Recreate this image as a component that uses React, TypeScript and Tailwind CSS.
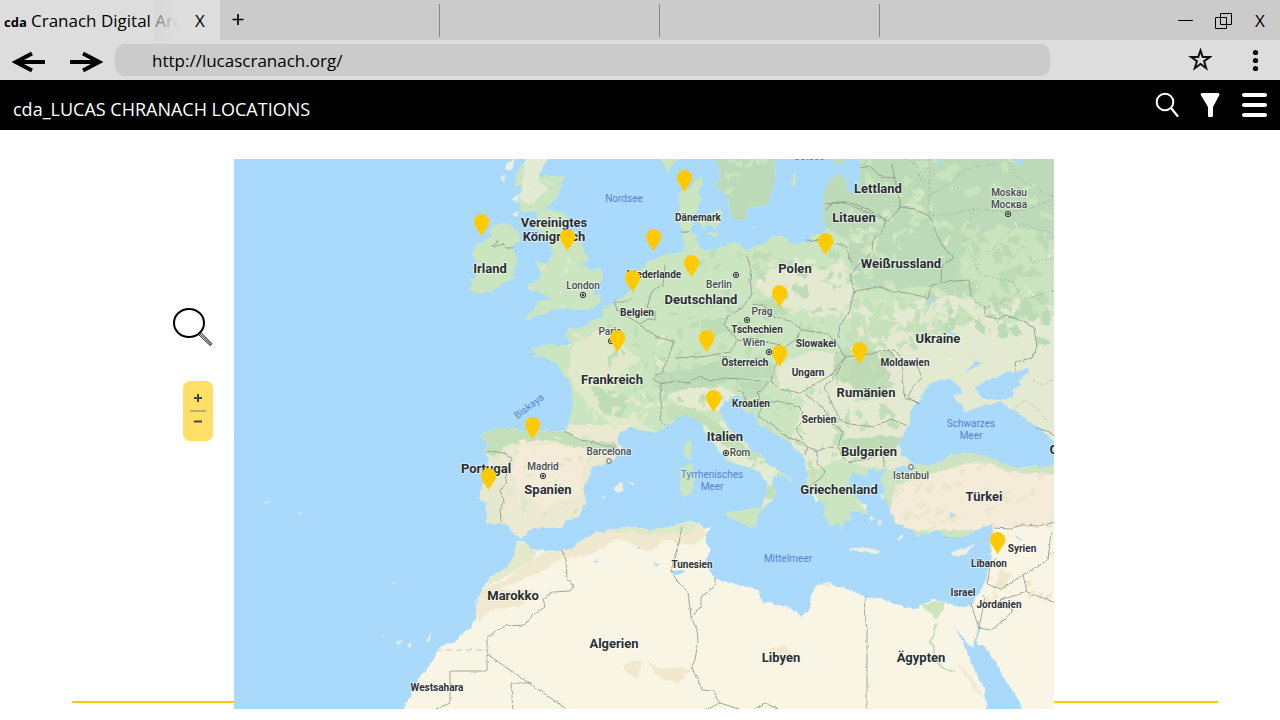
import type { ReactNode } from "react";

type Pin = { x: number; y: number; name: string };
type Label = { x: number; y: number; text: string; kind: "country" | "small" | "city" | "sea"; turn?: number };
type Zone = { x: number; y: number; w: number; h: number; n: number; size: number; fill: string };

/* Map coordinates: x runs from 234 to 1054, y from 159 to 709. */
const MAP = { x: 234, y: 159, w: 820, h: 550 };

const pins: Pin[] = [
  { x: 482, y: 214, name: "Irland" },
  { x: 568, y: 229, name: "Vereinigtes Königreich" },
  { x: 633, y: 270, name: "Belgien" },
  { x: 654, y: 229, name: "Nordsee" },
  { x: 685, y: 170, name: "Dänemark" },
  { x: 692, y: 255, name: "Norddeutschland" },
  { x: 826, y: 233, name: "Nordpolen" },
  { x: 780, y: 285, name: "Polen" },
  { x: 707, y: 330, name: "Süddeutschland" },
  { x: 780, y: 345, name: "Wien" },
  { x: 618, y: 330, name: "Paris" },
  { x: 860, y: 342, name: "Rumänien" },
  { x: 714, y: 390, name: "Norditalien" },
  { x: 533, y: 417, name: "Nordspanien" },
  { x: 489, y: 468, name: "Portugal" },
  { x: 998, y: 532, name: "Syrien" },
];

const labels: Label[] = [
  { x: 554, y: 227, text: "Vereinigtes", kind: "country" },
  { x: 554, y: 241, text: "Königreich", kind: "country" },
  { x: 490, y: 273, text: "Irland", kind: "country" },
  { x: 701, y: 304, text: "Deutschland", kind: "country" },
  { x: 795, y: 273, text: "Polen", kind: "country" },
  { x: 878, y: 193, text: "Lettland", kind: "country" },
  { x: 854, y: 222, text: "Litauen", kind: "country" },
  { x: 901, y: 268, text: "Weißrussland", kind: "country" },
  { x: 938, y: 343, text: "Ukraine", kind: "country" },
  { x: 612, y: 384, text: "Frankreich", kind: "country" },
  { x: 866, y: 397, text: "Rumänien", kind: "country" },
  { x: 725, y: 441, text: "Italien", kind: "country" },
  { x: 869, y: 456, text: "Bulgarien", kind: "country" },
  { x: 839, y: 494, text: "Griechenland", kind: "country" },
  { x: 984, y: 501, text: "Türkei", kind: "country" },
  { x: 486, y: 473, text: "Portugal", kind: "country" },
  { x: 548, y: 494, text: "Spanien", kind: "country" },
  { x: 513, y: 600, text: "Marokko", kind: "country" },
  { x: 614, y: 648, text: "Algerien", kind: "country" },
  { x: 781, y: 662, text: "Libyen", kind: "country" },
  { x: 921, y: 662, text: "Ägypten", kind: "country" },
  { x: 1076, y: 454, text: "Georgien", kind: "country" },
  { x: 698, y: 221, text: "Dänemark", kind: "small" },
  { x: 654, y: 278, text: "Niederlande", kind: "small" },
  { x: 637, y: 316, text: "Belgien", kind: "small" },
  { x: 757, y: 333, text: "Tschechien", kind: "small" },
  { x: 816, y: 347, text: "Slowakei", kind: "small" },
  { x: 745, y: 366, text: "Österreich", kind: "small" },
  { x: 808, y: 376, text: "Ungarn", kind: "small" },
  { x: 905, y: 366, text: "Moldawien", kind: "small" },
  { x: 751, y: 407, text: "Kroatien", kind: "small" },
  { x: 819, y: 423, text: "Serbien", kind: "small" },
  { x: 692, y: 568, text: "Tunesien", kind: "small" },
  { x: 437, y: 691, text: "Westsahara", kind: "small" },
  { x: 1022, y: 552, text: "Syrien", kind: "small" },
  { x: 989, y: 567, text: "Libanon", kind: "small" },
  { x: 963, y: 596, text: "Israel", kind: "small" },
  { x: 999, y: 608, text: "Jordanien", kind: "small" },
  { x: 583, y: 289, text: "London", kind: "city" },
  { x: 719, y: 288, text: "Berlin", kind: "city" },
  { x: 762, y: 315, text: "Prag", kind: "city" },
  { x: 754, y: 346, text: "Wien", kind: "city" },
  { x: 610, y: 335, text: "Paris", kind: "city" },
  { x: 543, y: 470, text: "Madrid", kind: "city" },
  { x: 609, y: 455, text: "Barcelona", kind: "city" },
  { x: 740, y: 456, text: "Rom", kind: "city" },
  { x: 911, y: 479, text: "Istanbul", kind: "city" },
  { x: 1009, y: 196, text: "Moskau", kind: "city" },
  { x: 1009, y: 208, text: "Москва", kind: "city" },
  { x: 624, y: 202, text: "Nordsee", kind: "sea" },
  { x: 809, y: 160, text: "Ostsee", kind: "sea" },
  { x: 531, y: 409, text: "Biskaya", kind: "sea", turn: -37 },
  { x: 712, y: 478, text: "Tyrrhenisches", kind: "sea" },
  { x: 712, y: 490, text: "Meer", kind: "sea" },
  { x: 971, y: 427, text: "Schwarzes", kind: "sea" },
  { x: 971, y: 439, text: "Meer", kind: "sea" },
  { x: 788, y: 562, text: "Mittelmeer", kind: "sea" },
];

const labelClass = {
  country: "fill-[#2b2f33] stroke-white/50 text-[13px] font-bold",
  small: "fill-[#2f3337] stroke-white/50 text-[10px] font-bold",
  city: "fill-[#474b50] stroke-white/50 text-[10px] font-medium",
  sea: "fill-[#5583cf] stroke-transparent text-[10px] font-normal",
};

const capitals = [[583, 295], [736, 275], [747, 320], [769, 352], [611, 341], [543, 476], [726, 453], [1008, 214]];
const towns = [[609, 461], [911, 467]];

const EURASIA =
  "M1060 150 860 150 860 175 859 190 855 195 848 190 845 178 838 174 829 182 823 192 823 222 826 228 822 234 810 237 812 241 800 244 788 243 787 237 773 235 766 243 753 247 747 250 738 242 728 244 718 249 706 251 700 247 697 240 695 235 690 232 693 226 692 218 696 210 703 198 698 192 703 186 702 177 695 180 691 187 680 192 678 199 680 208 677 217 680 224 683 232 682 240 685 245 683 251 675 253 665 255 655 259 647 262 643 268 638 270 632 280 630 292 621 298 613 302 604 307 602 318 593 320 582 328 567 328 567 335 570 345 553 345 545 345 532 348 537 352 533 356 547 358 558 365 562 373 568 380 573 390 572 403 570 417 567 430 557 432 543 430 527 432 510 428 498 427 493 430 482 435 487 447 485 453 488 457 487 467 485 477 480 493 480 500 487 503 486 523 492 524 500 523 508 525 515 535 523 538 528 530 543 528 562 528 567 520 577 517 587 500 583 490 592 467 600 465 610 462 620 453 622 447 618 442 620 433 630 428 640 430 655 433 665 427 683 415 695 418 702 425 708 437 720 450 728 462 750 467 760 473 767 483 768 493 763 502 761 508 767 507 773 500 777 493 772 487 773 477 785 475 792 483 793 480 783 473 765 463 767 457 753 452 743 440 733 433 723 420 720 410 723 402 737 395 740 398 742 410 747 414 753 412 757 423 773 433 790 443 800 453 806 460 807 480 806 487 815 497 826 505 824 515 830 527 838 523 843 532 845 520 852 520 850 511 862 512 868 514 862 503 855 495 850 488 848 478 853 472 860 475 868 477 866 470 880 470 888 466 883 473 881 480 885 490 883 494 887 502 890 510 895 523 913 530 917 537 938 530 947 537 963 537 977 530 993 523 992 530 990 547 992 557 987 577 980 592 972 605 978 630 1060 715Z";
const AFRICA =
  "M972 605 957 607 947 602 933 600 922 605 913 610 887 600 868 598 863 596 850 590 833 585 830 582 817 585 810 595 813 605 802 617 793 610 780 605 763 602 758 590 740 585 723 582 712 575 705 563 710 550 705 540 710 527 703 528 698 522 680 523 670 527 650 530 630 527 597 532 577 543 570 550 557 551 530 549 525 542 518 540 513 560 507 568 490 577 477 597 476 617 470 628 453 642 437 648 433 662 422 673 413 690 402 712 1060 712 1060 600Z";
const BRITAIN =
  "M527 159 517 171 514 185 521 187 518 199 522 212 536 211 538 216 531 222 541 233 551 245 553 254 548 263 534 261 537 268 541 271 540 280 527 285 530 290 540 292 546 297 555 298 540 301 532 311 523 319 530 319 539 315 548 313 553 310 563 308 577 310 593 308 602 300 599 295 593 295 595 288 603 281 604 272 598 268 588 270 583 265 588 261 583 248 580 235 568 229 567 218 558 210 545 209 557 197 565 177 545 175 541 178 538 174 551 156Z";
const IRELAND =
  "M492 235 488 233 493 226 505 223 518 230 520 240 512 247 517 258 513 280 502 283 490 292 477 294 470 290 472 283 469 280 477 276 472 272 477 262 473 255 475 245 483 243Z";
const SWEDEN = "M715 159 722 175 715 185 727 197 730 208 732 218 740 221 748 217 747 208 767 205 773 189 776 155 715 155Z";
const ISLANDS =
  "M658 155 667 172 679 158ZM709 215 715 209 722 212 720 222 715 230 708 223ZM698 221 705 218 707 225 702 229ZM706 233 720 233 715 238ZM751 226 755 227 753 229ZM791 181 796 171 797 178 793 188ZM833 156 850 156 843 164 837 165ZM683 447 690 438 692 447 690 460 685 457ZM680 467 692 465 695 477 692 493 683 498 680 487ZM726 514 735 510 766 508 757 516 757 526 750 529 740 522 728 518Z";
const PALE_ISLANDS =
  "M950 553 958 550 968 547 975 543 967 552 960 557 952 556ZM850 547 866 549 881 551 878 554 860 552 851 549ZM898 539 902 534 901 540ZM613 487 623 483 622 492 617 492ZM629 482 633 482 632 485ZM601 497 604 496 603 499ZM506 165 515 157 513 168 507 171ZM501 178 505 175 504 184ZM513 199 519 194 517 203ZM512 214 520 209 517 217ZM391 583 396 583 395 585ZM396 642 402 640 399 645ZM407 645 411 644 411 648ZM425 641 433 631 428 643ZM382 636 385 637 383 638ZM264 502 270 501 268 503ZM298 513 301 513 300 515ZM813 494 818 498 816 503ZM855 500 867 507 865 509ZM872 485 877 487 874 490ZM880 495 885 498 881 499ZM870 515 874 518 872 522ZM877 520 881 523 879 526Z";
const BLACK_SEA =
  "M932 382 940 380 950 380 962 388 962 393 953 397 963 405 965 413 980 407 993 403 1000 402 1017 412 1037 427 1056 442 1056 460 1047 467 1030 467 1010 467 993 458 980 454 963 453 950 455 940 463 922 465 913 463 902 455 898 443 905 433 910 420 910 410 918 402 925 390Z";
const AZOV = "M975 388 983 383 1007 373 1028 369 1030 372 1017 380 1022 385 1013 388 1012 398 997 400 983 398Z";
const RED_SEA =
  "M951 623 957 630 963 643 973 667 985 690 987 712 1024 712 1017 697 1005 680 997 663 983 645 977 645 979 627 976 632 973 646 968 645 958 630Z";

const borders = [
  "M498 240 493 247 503 244 508 249 513 247",
  "M632 298 627 302 614 302 617 310 630 318 640 324 648 319 655 320 655 312 647 308 650 297 653 290 663 285 665 266",
  "M640 324 646 330 660 338 674 341 669 356 663 370 653 379 661 384 660 395 662 407 660 420 665 425",
  "M661 384 675 381 688 383 700 376 709 381 725 378 744 379 761 381",
  "M746 254 751 268 750 280 752 294 742 308 727 317 724 325 738 340 730 352 700 357 675 358",
  "M752 304 765 306 772 316 789 320 802 330 828 334 838 345 845 357 831 375 800 393 780 389 771 380 776 365 781 350 795 340 802 330",
  "M738 341 752 337 765 342 781 345",
  "M682 231 691 233",
  "M826 204 840 202 852 206 870 213 885 220 884 229 873 240 872 252 860 263 850 275 854 292 849 313 840 325 838 338",
  "M806 240 825 241 846 246 851 263",
  "M826 210 832 203 848 202 868 209 888 221 901 207 896 185 892 165M860 168 870 166 881 177 896 178",
  "M901 207 914 209 929 216 935 230 943 247 954 258 942 265 941 282 931 286 928 298 920 296 907 293 893 292 880 287 866 289 852 292",
  "M941 282 955 281 969 280 971 297 985 308 985 316 999 319 1006 315 1022 321 1034 328 1037 347 1032 358 1015 362 1016 371",
  "M845 357 860 355 871 354 881 351 895 350 905 362 918 367 922 378 913 386 908 397 919 404",
  "M887 349 902 365 902 380 905 398 919 403",
  "M565 431 580 440 593 442 604 446 617 446",
  "M485 453 497 451 508 455 512 460 507 470 506 484 500 490 504 500 500 510 501 522",
  "M845 357 837 374 824 387 834 408 841 421 850 424 874 427 891 419 908 426",
  "M805 394 823 408 832 423 842 431 839 445 841 455 848 462 870 459 883 453 884 467",
  "M748 409 743 393 735 389M771 380 758 393 761 405 778 401 800 407 803 420 796 430 803 440",
  "M763 405 758 416 773 425 788 438 800 441 808 447 805 455M808 447 817 451 828 447 840 448M817 451 817 464 825 471 821 478 808 487",
  "M562 551 566 560 567 578 574 586 570 591 553 592 543 598 545 607 534 614 524 625 505 626 487 637 487 671 450 671 450 703 436 709",
  "M487 654 568 710M513 710 511 683 532 683",
  "M682 526 679 543 675 555 671 571 678 582 688 592 691 617 697 630 698 640 695 660 691 668 698 680 702 690 714 691 720 703 742 710M720 703 706 710M752 710 765 703 780 710",
  "M715 578 715 586 701 597 701 606 692 617",
  "M866 597 864 608 867 630 867 712",
  "M971 603 979 629 985 596M979 628 991 630 1004 620 1013 610 1003 605 1000 600 1027 592 1023 575 1001 589 987 584 990 568 996 558M1027 592 1054 602M1023 575 1048 560 1051 532 1060 530",
  "M994 528 1009 529 1022 525 1038 526 1060 521",
  "M1036 428 1047 431 1056 437",
];

const regional = [
  "M930 155 929 215 946 215 974 209 1006 212 1023 210 1054 200",
  "M929 195 938 190 952 182 967 168 1000 163M1006 159 1020 180 1053 197",
  "M974 209 963 238 974 260 992 250 1008 232 1022 224 1050 233",
  "M974 260 980 274 1013 282 1022 300 1054 290M1008 263 1023 245 1032 262 1054 258",
  "M985 308 1010 300 1022 287M1013 410 1025 400 1038 409 1048 422",
  "M1033 380 1043 385 1054 379M905 159 918 165 920 178 930 184",
];

const zones: Zone[] = [
  { x: 850, y: 155, w: 210, h: 170, n: 75, size: 10, fill: "#c9e3bd" },
  { x: 930, y: 230, w: 124, h: 110, n: 40, size: 12, fill: "#bcdab6" },
  { x: 850, y: 190, w: 100, h: 130, n: 32, size: 7, fill: "#d5e7c3" },
  { x: 690, y: 250, w: 160, h: 80, n: 48, size: 8, fill: "#bddcb7" },
  { x: 600, y: 300, w: 170, h: 100, n: 60, size: 7, fill: "#bfddb8" },
  { x: 575, y: 330, w: 90, h: 100, n: 26, size: 8, fill: "#e1e9cd" },
  { x: 770, y: 260, w: 80, h: 55, n: 34, size: 8, fill: "#e5e9d0" },
  { x: 850, y: 300, w: 204, h: 60, n: 44, size: 9, fill: "#e3e9cf" },
  { x: 850, y: 300, w: 90, h: 50, n: 30, size: 8, fill: "#c5e0ba" },
  { x: 750, y: 390, w: 110, h: 100, n: 44, size: 6, fill: "#c3e0ba" },
  { x: 835, y: 350, w: 60, h: 110, n: 26, size: 9, fill: "#c3dfb9" },
  { x: 490, y: 430, w: 110, h: 100, n: 24, size: 6, fill: "#dbe7c6" },
  { x: 510, y: 440, w: 90, h: 80, n: 22, size: 6, fill: "#f3ead5" },
  { x: 685, y: 400, w: 110, h: 90, n: 26, size: 5, fill: "#c8e2bd" },
  { x: 885, y: 465, w: 170, h: 65, n: 34, size: 7, fill: "#eae7cd" },
  { x: 985, y: 550, w: 70, h: 140, n: 22, size: 7, fill: "#f0e8cf" },
  { x: 520, y: 180, w: 80, h: 130, n: 14, size: 5, fill: "#d9e9cc" },
  { x: 720, y: 159, w: 50, h: 50, n: 9, size: 7, fill: "#c9e4c0" },
];

/* A small seeded generator keeps the terrain the same on every render. */
function patches(zone: Zone, seed: number): string {
  let s = seed * 7919 + 17;
  const next = () => {
    s = (s * 16807) % 2147483647;
    return s / 2147483647;
  };
  next();
  let d = "";
  for (let i = 0; i < zone.n; i++) {
    const cx = zone.x + next() * zone.w;
    const cy = zone.y + next() * zone.h;
    const tilt = next() * Math.PI;
    for (let k = 0; k < 8; k++) {
      const a = (k / 8) * Math.PI * 2;
      const r = zone.size * (0.3 + next() * 0.8);
      const u = Math.cos(a) * r;
      const v = Math.sin(a) * r * 0.5;
      const px = cx + u * Math.cos(tilt) - v * Math.sin(tilt);
      const py = cy + u * Math.sin(tilt) + v * Math.cos(tilt);
      d += `${k === 0 ? "M" : "L"}${px.toFixed(1)} ${py.toFixed(1)}`;
    }
    d += "Z";
  }
  return d;
}

function Terrain() {
  return (
    <svg
      viewBox={`${MAP.x} ${MAP.y} ${MAP.w} ${MAP.h}`}
      className="block w-full bg-[#a9dafc] font-['Roboto',sans-serif]"
      role="img"
      aria-label="Karte von Europa"
    >
      <defs>
        <clipPath id="land">
          <path d={EURASIA + BRITAIN + IRELAND + SWEDEN + ISLANDS} />
        </clipPath>
        <clipPath id="africa">
          <path d={AFRICA} />
        </clipPath>
        <filter id="coast" filterUnits="userSpaceOnUse" x="224" y="149" width="840" height="570">
          <feTurbulence type="fractalNoise" baseFrequency="0.13" numOctaves="3" seed="4" result="noise" />
          <feDisplacementMap in="SourceGraphic" in2="noise" scale="5" xChannelSelector="R" yChannelSelector="G" />
        </filter>
        <filter id="edge" filterUnits="userSpaceOnUse" x="224" y="149" width="840" height="570">
          <feTurbulence type="fractalNoise" baseFrequency="0.2" numOctaves="2" seed="9" result="noise" />
          <feDisplacementMap in="SourceGraphic" in2="noise" scale="3" xChannelSelector="R" yChannelSelector="G" />
        </filter>
      </defs>

      <g filter="url(#coast)">
        <g clipPath="url(#land)">
          <rect x="224" y="149" width="840" height="570" fill="#cbe5c1" />
          <path fill="#bcdab7" d="M826 150H1060V235L1000 232 985 250 960 300 930 285 890 290 850 285 850 240 820 225Z" />
          <path fill="#bcdab7" d={SWEDEN} />
          <path fill="#c9e4be" d="M960 245 1000 225 1060 235V310L1000 322 960 275Z" />
          <path fill="#e4ead1" d="M855 300 880 318 920 300 950 295 975 302 1000 325 1060 315V470H890L845 462 842 405 880 398 870 365 850 352Z" />
          <path fill="#c6e1bb" d="M850 312 890 320 945 325 960 305 975 320 940 335 900 330 870 352 850 345Z" />
          <path fill="#e4ead0" d="M770 270 795 262 820 268 845 272 852 300 838 315 805 310 778 306 755 285Z" />
          <path fill="#e4ead1" d="M776 365 815 350 845 357 832 375 860 392 850 408 885 412 905 405V440L860 436 840 460 800 475 790 440 805 400 780 388Z" />
          <path fill="#bddab4" d="M835 352 875 350 890 375 885 395 862 400 852 385 832 378ZM840 440 880 436 905 438 895 448 860 452 842 448Z" />
          <path fill="#bcdab5" d="M654 372 690 370 720 360 770 362 776 378 742 378 700 390 665 392ZM740 382 770 380 760 395 742 400Z" />
          <path fill="#e5ebd2" d="M666 396 690 388 725 388 740 397 724 402 722 412 700 410 680 405ZM700 425 730 418 748 445 780 470 795 484 775 478 774 500 762 508 767 485 740 467 715 450Z" />
          <path fill="#c2dfb8" d="M665 405 690 408 715 420 735 440 765 458 750 460 722 445 705 425 668 418ZM765 485 777 488 772 500 765 498Z" />
          <path fill="#e1e9cb" d="M572 345 600 330 625 345 640 360 620 372 610 400 600 415 575 390 568 372ZM600 415 640 420 655 432 620 432Z" />
          <path fill="#bfdcb5" d="M590 385 618 392 632 400 620 418 600 410ZM755 300 775 300 790 315 770 315ZM700 320 720 318 730 330 715 336Z" />
          <path fill="#ece9d2" d="M478 425H630V545H478Z" />
          <path fill="#c2dfb9" d="M480 428 500 424 535 430 568 432 580 440 615 442 618 450 585 448 540 440 505 446 495 462 485 450ZM548 447 558 448 552 454Z" />
          <path fill="#e2e9cf" d="M480 462 500 455 506 470 500 490 498 525 480 525Z" />
          <path fill="#f4ebd9" d="M520 447 560 445 590 450 582 472 580 495 545 505 522 495 512 470ZM896 485 925 475 960 465 1060 465V530H900L890 510Z" />
          <path fill="#cfe3c0" d="M908 462 940 460 965 450 1000 456 1056 460V474L1010 472 980 460 945 470 910 472Z" />
          <path fill="#f9f5e5" d="M994 530 1060 522V720H960V600L985 580Z" />
          <path fill="#efe7ce" d="M1000 568 1012 575 1005 590 994 586ZM985 645 1010 660 1045 670 1048 700 1026 706 1010 680Z" />
          <path fill="#e4ebd5" d="M526 155H550L538 180 548 190 530 205 520 200Z" />
          {zones.map((zone, i) => (
            <path key={i} d={patches(zone, i + 3)} fill={zone.fill} />
          ))}
          <path d={patches({ x: 560, y: 180, w: 494, h: 310, n: 85, size: 2, fill: "" }, 41)} fill="#eff6ef" />
        </g>
        <g clipPath="url(#africa)">
          <rect x="390" y="510" width="680" height="210" fill="#f9f5e5" />
          <path fill="#f0e8cf" d="M478 590 505 580 530 560 560 545 570 552 545 570 520 580 500 590 535 590 522 606 490 610 480 622 474 610Z" />
          <path fill="#e3e9cb" d="M517 542 540 545 532 560 508 575 485 587 495 572Z" />
          <path fill="#f0e8cf" d="M563 545 600 528 640 524 700 522 708 535 690 545 665 540 650 552 620 538 590 555 567 558Z" />
          <path fill="#dce8c6" d="M600 531 640 525 700 522 690 533 650 534Z" />
          <path fill="#f0e8cf" d="M645 660 660 668 690 668 678 684 660 678ZM624 664 642 660 638 678 628 674ZM770 650 784 645 792 654 778 660ZM955 660 970 675 985 700 975 690ZM815 585 835 580 828 587Z" />
          <path fill="#cbe5c1" d="M920 605 947 600 940 615 937 619Z" />
          <path fill="none" stroke="#c5dfbb" strokeWidth="2" d="M937 623 931 642 936 660 945 669 954 672" />
        </g>
        <path d={PALE_ISLANDS} fill="#eef0e2" />
        <path d={BLACK_SEA + AZOV + RED_SEA} fill="#a9dafc" />
        <path
          fill="#a9dafc"
          d="M893 470 902 466 917 468 907 473 896 472ZM670 571 683 570 685 573 675 575ZM653 562 660 564 655 567ZM593 562 598 558 597 563ZM635 547 641 547 640 549ZM928 300 932 298 930 308ZM946 328 960 337 950 334ZM965 374 974 360 983 364 972 367ZM790 262 795 259 790 267ZM935 162 942 162 938 168ZM1011 155 1024 159 1018 168ZM952 511 955 515 950 518ZM1015 535 1023 541 1018 540Z"
        />
      </g>

      <g filter="url(#edge)" fill="none" stroke="#8c958a" strokeOpacity="0.8">
        {borders.map((d) => (
          <path key={d} d={d} />
        ))}
        <path d="M436 650H487" strokeDasharray="6 4" strokeOpacity="0.5" />
        {regional.map((d) => (
          <path key={d} d={d} strokeDasharray="2 2" strokeOpacity="0.5" />
        ))}
      </g>

      {capitals.map(([x, y]) => (
        <g key={`${x}-${y}`} stroke="#33373b">
          <circle cx={x} cy={y} r="2.7" fill="#e8efe2" />
          <circle cx={x} cy={y} r="1" fill="#33373b" />
        </g>
      ))}
      {towns.map(([x, y]) => (
        <circle key={`${x}-${y}`} cx={x} cy={y} r="2.3" fill="#eef2ea" stroke="#555b60" />
      ))}

      {labels.map((l) => (
        <text
          key={`${l.text}-${l.x}-${l.y}`}
          x={l.x}
          y={l.y}
          textAnchor="middle"
          strokeWidth="2"
          paintOrder="stroke"
          strokeLinejoin="round"
          transform={l.turn ? `rotate(${l.turn} ${l.x} ${l.y})` : undefined}
          className={labelClass[l.kind]}
        >
          {l.text}
        </text>
      ))}
    </svg>
  );
}

function MapPin({ pin }: { pin: Pin }) {
  return (
    <button
      type="button"
      aria-label={pin.name}
      className="absolute h-[22px] w-4 -translate-x-1/2"
      style={{ left: `${((pin.x - MAP.x) / MAP.w) * 100}%`, top: `${((pin.y - MAP.y) / MAP.h) * 100}%` }}
    >
      <svg viewBox="0 0 16 22" className="block h-full w-full">
        <path d="M7.500 22 1.500 12.400C.6 11 0 9.500 0 7.700a7.600 7.700 0 0 1 15.200 0c0 1.800-.6 3.300-1.500 4.700Z" fill="#ffcb00" />
      </svg>
    </button>
  );
}

function IconButton({ label, className, children }: { label: string; className: string; children: ReactNode }) {
  return (
    <button type="button" aria-label={label} className={`flex shrink-0 items-center justify-center ${className}`}>
      {children}
    </button>
  );
}

function BrowserChrome() {
  return (
    <div className="bg-[#ddd] text-[17px] text-black">
      <div className="flex h-10 bg-[#cbcbcb]">
        <div className="flex w-[220px] shrink-0 items-center bg-[#ddd] pl-1 pt-px">
          <span className="mt-1 w-[27px] shrink-0 text-[13px] font-bold">cda</span>
          <div className="relative w-[147px] overflow-hidden whitespace-nowrap leading-10">
            Cranach Digital Arc
            <span className="absolute inset-y-0 right-0 w-6 bg-linear-to-r from-[#d2d2d2]/50 to-[#ddd]" />
          </div>
          <IconButton label="Tab schließen" className="ml-3 h-8 w-5">X</IconButton>
        </div>
        <div className="flex h-[33px] w-[220px] items-center self-center border-r border-[#888] pl-[11px]">
          <IconButton label="Neuer Tab" className="h-8 w-[14px]">
            <svg viewBox="0 0 14 14" className="h-[14px] w-[14px]" stroke="black" strokeWidth="1.700">
              <path d="M1.500 6.500H12.500M7 1V12" />
            </svg>
          </IconButton>
        </div>
        <div className="h-[33px] w-[220px] self-center border-r border-[#888]" />
        <div className="h-[33px] w-[220px] self-center border-r border-[#888]" />
        <div className="ml-auto flex items-center gap-[18px] pr-[11px] pt-px">
          <IconButton label="Minimieren" className="h-8 w-5">
            <svg viewBox="0 0 20 20" className="h-5 w-5" stroke="black">
              <path d="M3 9.500H18" />
            </svg>
          </IconButton>
          <IconButton label="Fenster verkleinern" className="h-8 w-5">
            <svg viewBox="0 0 20 20" className="h-5 w-5" fill="#cbcbcb" stroke="black">
              <path d="M7.500 2.500H18.500V13.500H7.500ZM2.500 6.500H13.500V17.500H2.500Z" />
            </svg>
          </IconButton>
          <IconButton label="Schließen" className="h-8 w-[18px]">X</IconButton>
        </div>
      </div>
      <div className="flex h-10 items-center">
        <IconButton label="Zurück" className="ml-3 h-8 w-[34px]">
          <svg viewBox="0 0 34 24" className="mt-1 h-6 w-[34px]" fill="none" stroke="black" strokeWidth="4">
            <path d="M33 12H5M20 3.500 4 12 20 20.500" />
          </svg>
        </IconButton>
        <IconButton label="Vorwärts" className="ml-[23px] h-8 w-[34px]">
          <svg viewBox="0 0 34 24" className="mt-1 h-6 w-[34px]" fill="none" stroke="black" strokeWidth="4">
            <path d="M1 12H29M14 3.500 30 12 14 20.500" />
          </svg>
        </IconButton>
        <input
          aria-label="Adresse"
          defaultValue="http://lucascranach.org/"
          className="ml-3 h-8 min-w-0 flex-1 rounded-[10px] bg-[#cbcbcb] pl-[37px] pr-4 outline-none"
        />
        <IconButton label="Lesezeichen" className="ml-[138px] h-8 w-6">
          <svg viewBox="0 0 24 24" className="h-6 w-6" fill="none" stroke="#111" strokeWidth="2">
            <path d="M12.500 2.500 14.700 9.100H21.800L16.100 13.200 18.200 20.200 12.500 16 6.800 20.200 8.900 13.200 3.200 9.100H10.300Z" />
          </svg>
        </IconButton>
        <IconButton label="Menü" className="ml-[31px] mr-[13px] h-8 w-6">
          <svg viewBox="0 0 24 24" className="h-6 w-6">
            <circle cx="12.500" cy="4.500" r="2.600" />
            <circle cx="12.500" cy="12.500" r="2.600" />
            <circle cx="12.500" cy="20.500" r="2.600" />
          </svg>
        </IconButton>
      </div>
    </div>
  );
}

export default function App() {
  return (
    <div className="min-h-screen bg-white font-['Open_Sans',sans-serif]">
      <BrowserChrome />
      <header className="flex h-[50px] items-center bg-black pl-[13px] pr-3 text-white">
        <h1 className="mt-2 text-lg">cda_LUCAS CHRANACH LOCATIONS</h1>
        <nav className="ml-auto flex items-center">
          <IconButton label="Suche" className="h-8 w-[26px]">
            <svg viewBox="0 0 26 26" className="h-[26px] w-[26px]" fill="none" stroke="white" strokeWidth="2" strokeLinecap="round">
              <circle cx="11" cy="10" r="8.300" />
              <path d="m17 16 6.500 8" strokeWidth="2.200" />
            </svg>
          </IconButton>
          <IconButton label="Filter" className="ml-5 h-8 w-5">
            <svg viewBox="0 0 20 26" className="h-[26px] w-5" fill="white">
              <path d="M2 1H18C19.200 1 19.800 2 19.400 3L13 15V23.500C13 24.500 12.500 25 11.500 25H9.500C8.500 25 8 24.500 8 23.500V15L.8 3C.4 2 .8 1 2 1Z" />
            </svg>
          </IconButton>
          <IconButton label="Hauptmenü" className="ml-[21px] h-8 w-[27px]">
            <svg viewBox="0 0 27 26" className="h-[26px] w-[27px]" fill="white">
              <rect x="1" y="1" width="25" height="4" rx="2" />
              <rect x="1" y="11" width="25" height="4" rx="2" />
              <rect x="1" y="21" width="25" height="4" rx="2" />
            </svg>
          </IconButton>
        </nav>
      </header>

      <main className="relative flex pb-[11px] pt-[29px]">
        <hr className="absolute bottom-[17px] left-[72px] right-[62px] border-t-2 border-[#ffcb00]" />
        <aside className="flex w-[234px] shrink-0 flex-col items-end pr-[21px] pt-[147px]">
          <IconButton label="Karte durchsuchen" className="h-10 w-[42px]">
            <svg viewBox="0 0 42 40" className="h-10 w-[42px]" fill="none" stroke="black">
              <ellipse cx="18" cy="17" rx="15" ry="14" strokeWidth="2" />
              <path d="m27 28 2.500-2L41 37.800 39.200 39.500ZM28.500 27.300 40 38.500" strokeWidth="0.900" />
            </svg>
          </IconButton>
          <div className="mt-[35px] flex h-[60px] w-[30px] flex-col items-center rounded-[7px] bg-[#ffdf66] pt-[5px] text-[#444]">
            <IconButton label="Vergrößern" className="h-6 w-full">
              <svg viewBox="0 0 8 8" className="h-2 w-2" stroke="currentColor" strokeWidth="2">
                <path d="M0 4H8M4 0V8" />
              </svg>
            </IconButton>
            <span className="h-0.5 w-4 bg-[#b9ad74]" />
            <IconButton label="Verkleinern" className="h-5 w-full">
              <svg viewBox="0 0 8 8" className="h-2 w-2" stroke="currentColor" strokeWidth="2">
                <path d="M0 3.500H8" />
              </svg>
            </IconButton>
          </div>
        </aside>
        <section aria-label="Karte" className="relative mr-[226px] min-w-0 flex-1">
          <Terrain />
          {pins.map((pin) => (
            <MapPin key={pin.name} pin={pin} />
          ))}
        </section>
      </main>
    </div>
  );
}
